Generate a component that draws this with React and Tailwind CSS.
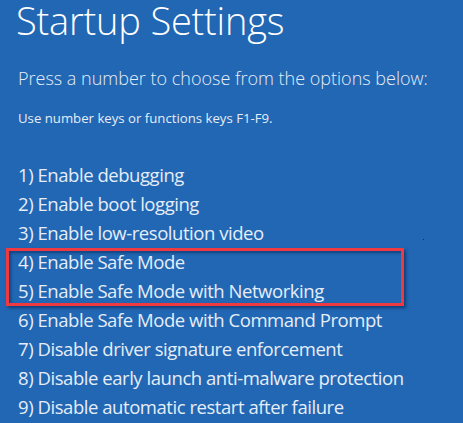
export default function App() {
    const items = [
        '1) Enable debugging',
        '2) Enable boot logging',
        '3) Enable low-resolution video',
        '4) Enable Safe Mode',
        '5) Enable Safe Mode with Networking',
        '6) Enable Safe Mode with Command Prompt',
        '7) Disable driver signature enforcement',
        '8) Disable early launch anti-malware protection',
        '9) Disable automatic restart after failure',
    ];

    return (
        <div className="relative h-[423px] w-[463px] overflow-hidden bg-[#2167b4] font-['Open_Sans',sans-serif] text-[#e6edf7]">
            <div className="flex flex-col pl-4">
                <h1 className="text-[38px] font-light leading-[40px] tracking-[-0.2px] text-white">Startup Settings</h1>
                <p className="mt-[26px] pl-[2px] text-[18px] font-light leading-[24px]">
                    Press a number to choose from the options below:
                </p>
                <p className="mt-[19px] pl-[2px] text-[13.2px] leading-[18px]">Use number keys or functions keys F1-F9.</p>

                {/* options; 4 and 5 are boxed in red */}
                <ul className="mt-[33px] pl-[2px] text-[18.5px] leading-[29px] tracking-[-0.45px]">
                    {items.slice(0, 3).map((t) => (
                        <li key={t}>{t}</li>
                    ))}
                    <li className="-ml-[12px] mr-[59px] mt-[1px] border-[3px] border-[#ee3a40] pl-[9px] shadow-[inset_2px_2px_3px_rgba(0,20,60,0.45),2px_2px_3px_rgba(0,20,60,0.5)]">
                        <div className="-mt-[4px]">{items[3]}</div>
                        <div className="-mb-[2px]">{items[4]}</div>
                    </li>
                    {items.slice(5).map((t, i) => (
                        <li key={t} className={i === 0 ? '-mt-[1px]' : ''}>
                            {t}
                        </li>
                    ))}
                </ul>
            </div>
            <span className="absolute left-[423px] top-[239px] h-[1px] w-[1px] bg-[#0a2a55]" />
        </div>
    );
}
